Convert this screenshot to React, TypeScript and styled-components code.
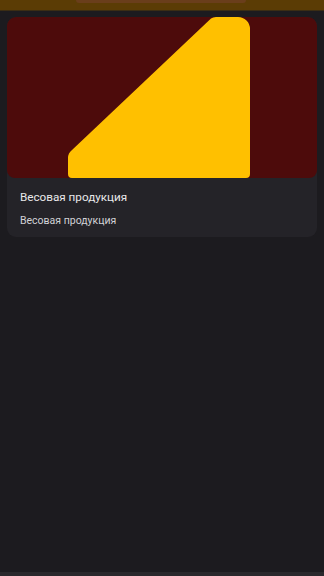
import React from "react";
import styled, { createGlobalStyle } from "styled-components";

const Global = createGlobalStyle`
  html, body { margin: 0; padding: 0; background: #1c1b1f; }
  body { font-family: Roboto, "Noto Sans", "Liberation Sans", sans-serif; }
`;

const Page = styled.div`
  height: 576px;
  background: #1c1b1f;
  display: flex;
  flex-direction: column;
`;

const TopBar = styled.div`
  height: 10px;
  background: #5b3c05;
  border-bottom: 1px solid #3b2d14;
  display: flex;
  justify-content: center;
`;

const TopPill = styled.div`
  width: 170px;
  height: 3px;
  margin-left: -2px;
  background: #6a3e1b;
  border-radius: 0 0 3px 3px;
`;

const Content = styled.div`
  padding: 6px 7px 0;
  flex: 1;
`;

const Card = styled.div`
  background: #242328;
  border-radius: 9px;
  overflow: hidden;
`;

const Cover = styled.div`
  height: 161px;
  background: #4d0b0b;
  border-radius: 8px;
  overflow: hidden;
  svg { display: block; }
`;

const Body = styled.div`
  padding: 10px 13px 9px;
  display: flex;
  flex-direction: column;
  gap: 8px;
`;

const Title = styled.div`
  color: #e8e8ea;
  font-size: 11.7px;
  line-height: 18px;
`;

const Subtitle = styled.div`
  color: #d2d2d6;
  font-size: 10.5px;
  line-height: 14px;
`;

const BottomStrip = styled.div`
  height: 4px;
  background: #29282c;
`;

export default function App() {
  return (
    <Page>
      <Global />
      <TopBar>
        <TopPill />
      </TopBar>
      <Content>
        <Card>
          <Cover>
            <svg width="310" height="161" viewBox="0 0 310 161">
              <path
                d="M 204 1.5 Q 206 0 209 0 H 231 A 12 12 0 0 1 243 12 V 157 A 4 4 0 0 1 239 161 H 65 A 4 4 0 0 1 61 157 V 141 Q 61 136 65 133 Z"
                fill="#ffc000"
              />
            </svg>
          </Cover>
          <Body>
            <Title>Весовая продукция</Title>
            <Subtitle>Весовая продукция</Subtitle>
          </Body>
        </Card>
      </Content>
      <BottomStrip />
    </Page>
  );
}
